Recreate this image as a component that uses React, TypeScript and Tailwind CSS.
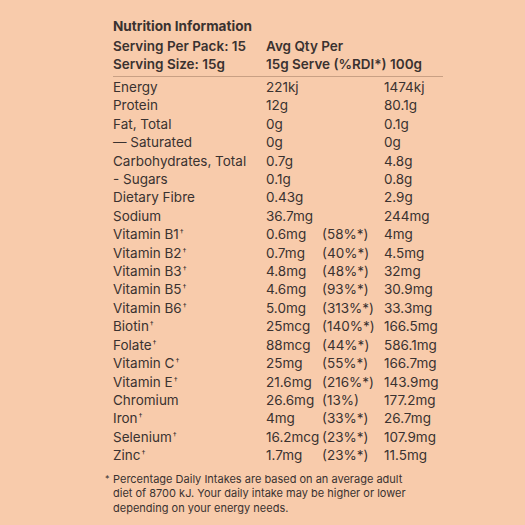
import React from "react";

const rows: [string, string, string, string, boolean?][] = [
  ["Energy", "221kj", "", "1474kj"],
  ["Protein", "12g", "", "80.1g"],
  ["Fat, Total", "0g", "", "0.1g"],
  ["— Saturated", "0g", "", "0g"],
  ["Carbohydrates, Total", "0.7g", "", "4.8g"],
  ["- Sugars", "0.1g", "", "0.8g"],
  ["Dietary Fibre", "0.43g", "", "2.9g"],
  ["Sodium", "36.7mg", "", "244mg"],
  ["Vitamin B1", "0.6mg", "(58%*)", "4mg", true],
  ["Vitamin B2", "0.7mg", "(40%*)", "4.5mg", true],
  ["Vitamin B3", "4.8mg", "(48%*)", "32mg", true],
  ["Vitamin B5", "4.6mg", "(93%*)", "30.9mg", true],
  ["Vitamin B6", "5.0mg", "(313%*)", "33.3mg", true],
  ["Biotin", "25mcg", "(140%*)", "166.5mg", true],
  ["Folate", "88mcg", "(44%*)", "586.1mg", true],
  ["Vitamin C", "25mg", "(55%*)", "166.7mg", true],
  ["Vitamin E", "21.6mg", "(216%*)", "143.9mg", true],
  ["Chromium", "26.6mg", "(13%)", "177.2mg"],
  ["Iron", "4mg", "(33%*)", "26.7mg", true],
  ["Selenium", "16.2mcg", "(23%*)", "107.9mg", true],
  ["Zinc", "1.7mg", "(23%*)", "11.5mg", true],
];

export default function App() {
  return (
    <div
      className="w-[525px] h-[525px] bg-[#f8cbab] text-[#3a3230] pl-[113px] pt-[17px]"
      style={{ fontFamily: 'Inter, "Open Sans", sans-serif' }}
    >
      <div className="w-[330px]">
        <div className="text-[13.6px] font-bold leading-[18px]">Nutrition Information</div>
        <div className="mt-[2px] grid grid-cols-[153px_1fr] text-[13.5px] font-semibold leading-[18px]">
          <div>Serving Per Pack: 15</div>
          <div>Avg Qty Per</div>
          <div>Serving Size: 15g</div>
          <div>15g Serve (%RDI*) 100g</div>
        </div>
        <div className="mt-[3px] h-px bg-[#c9a084]" />
        <div className="mt-[1px] text-[13.5px] leading-[18.4px]">
          {rows.map(([l, a, p, b, dag]) => (
            <div key={l} className="grid grid-cols-[153px_56px_62px_1fr]">
              <div>
                {l}
                {dag && (
                  <span className="text-[8px] leading-none align-top relative top-[3px] ml-[1px]">†</span>
                )}
              </div>
              <div>{a}</div>
              <div>{p}</div>
              <div>{b}</div>
            </div>
          ))}
        </div>
      </div>
      <div className="mt-[7px] -ml-[8px] flex text-[11px] leading-[14.5px]">
        <span className="w-[8px] text-[9px]">*</span>
        <p className="w-[300px]">
          Percentage Daily Intakes are based on an average adult diet of 8700 kJ. Your daily
          intake may be higher or lower depending on your energy needs.
        </p>
      </div>
    </div>
  );
}
